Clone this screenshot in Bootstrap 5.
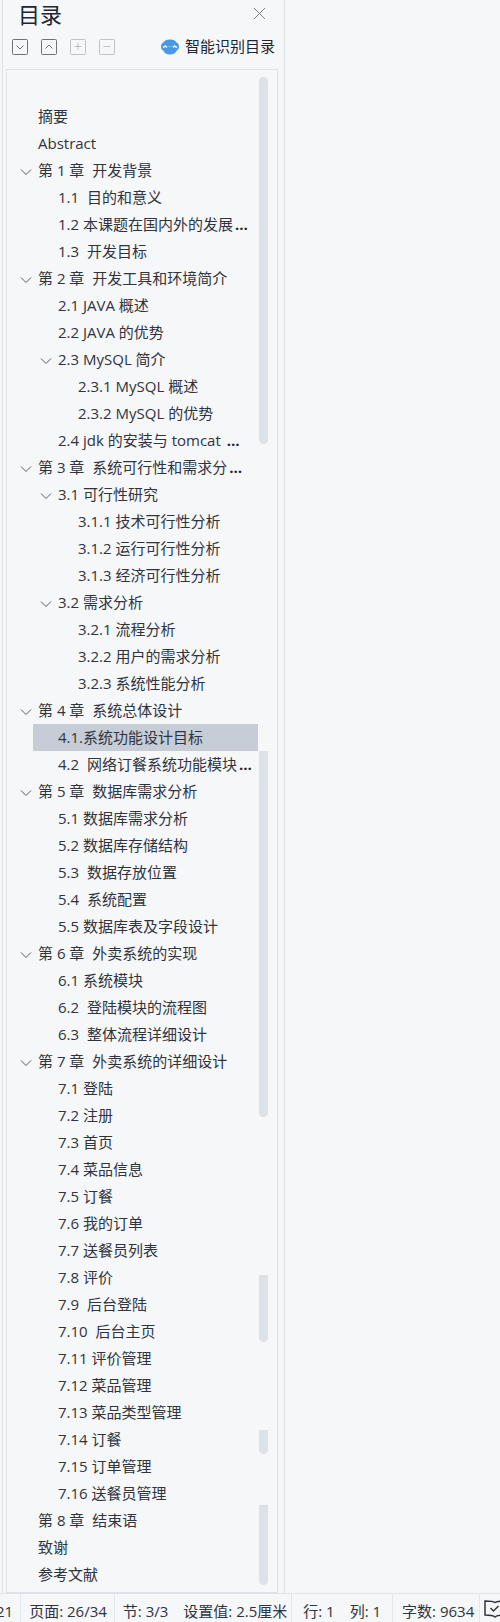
<!DOCTYPE html>
<html lang="zh-CN">
<head>
<meta charset="utf-8">
<meta name="viewport" content="width=device-width, initial-scale=1">
<title>目录</title>
<link rel="stylesheet" href="https://cdn.jsdelivr.net/npm/bootstrap@5.3.0/dist/css/bootstrap.min.css">
<style>
  :root { --ink: #30343e; --line: #dfe3e8; --thumb: #dde2e7; }
  body { background: #f5f7f9; color: var(--ink); font: 15px/27px "Open Sans", "Noto Sans CJK SC", sans-serif; }
  a { color: inherit; text-decoration: none; }
  svg { display: block; fill: none; stroke: currentColor; }
  .plain { border: 0; padding: 0; background: none; color: inherit; }
  .outline-pane { width: 283px; margin-left: 2px; border: solid var(--line); border-width: 0 1px; padding: 0 6px 0 3px; }
  .pane-head { height: 31px; padding: 0 12px; }
  .pane-title { font-size: 22px; line-height: 27px; margin-top: -3px; color: #202632; }
  .pane-close { color: #7b8088; margin-top: -4px; }
  .tools { height: 38px; padding: 0 3px 7px 6px; color: #6e7279; }
  .tools .tool-set { gap: 13px; }
  .tools button:disabled { color: #bfc3c8; }
  .smart { gap: 6px; color: #202632; }
  .tree { border: 1px solid var(--line); padding: 33px 0 4px; }
  .tree li { height: 27px; padding-right: 19px; white-space: nowrap; }
  .tree li > a { flex: 1 1 0; min-width: 0; margin-left: 26px; padding-left: 5px; }
  .tree .lv2 > a { padding-left: 25px; }
  .tree .lv3 > a { padding-left: 45px; }
  .tree .toggle { width: 26px; padding: 3px 0 0 13px; color: #555a63; }
  .tree .lv2 .toggle { width: 46px; padding-left: 33px; }
  .tree .toggle + a { margin-left: 0; padding-left: 5px; }
  .tree .active > a { background: #c6cdd7; }
  .more { font-weight: 700; margin-left: 2px; color: #20242c; }
  .thumbs { top: 7px; right: 9px; width: 9px; }
  .thumbs span { background: var(--thumb); border-radius: 0 0 5px 5px; }
  .thumbs .t1 { height: 367px; border-radius: 5px; }
  .thumbs .t2 { height: 366px; margin-top: 307px; }
  .thumbs .t3 { height: 67px; margin-top: 158px; }
  .thumbs .t4 { height: 24px; margin-top: 88px; }
  .thumbs .t5 { height: 80px; margin-top: 51px; }
  .status { height: 30px; border-top: 1px solid var(--line); line-height: 35px; white-space: nowrap; }
  .status .cell { padding: 0 7px 0 8px; border-right: 1px solid #e4e7eb; gap: 15px; }
  .status .cell:first-child { padding-left: 0; margin-left: -4px; }
  .status .units { padding-right: 4px; }
  .status .wide { padding: 0 11px; }
  .status .count { padding: 0 5px 0 9px; }
</style>
</head>
<body>
<div class="d-flex flex-column min-vh-100 overflow-hidden">
  <main class="d-flex flex-grow-1">
    <aside class="outline-pane flex-shrink-0 d-flex flex-column">
      <header class="pane-head d-flex justify-content-between align-items-center">
        <h1 class="pane-title mb-0 fw-normal">目录</h1>
        <button class="plain pane-close" aria-label="关闭"><svg width="13" height="13" viewBox="0 0 13 13"><path d="M1 1l11 11M12 1L1 12"/></svg></button>
      </header>
      <div class="tools d-flex justify-content-between align-items-center">
        <div class="tool-set d-flex">
          <button class="plain" aria-label="展开"><svg width="16" height="16" viewBox="0 0 16 16"><rect x=".5" y=".5" width="15" height="15" rx="1"/><path d="M4.500 6.500L8 10l3.500-3.500"/></svg></button>
          <button class="plain" aria-label="收起"><svg width="16" height="16" viewBox="0 0 16 16"><rect x=".5" y=".5" width="15" height="15" rx="1"/><path d="M4.500 9.500L8 6l3.500 3.500"/></svg></button>
          <button class="plain" aria-label="增加" disabled><svg width="16" height="16" viewBox="0 0 16 16"><rect x=".5" y=".5" width="15" height="15" rx="1"/><path d="M4.500 7.500h7M8 4v7"/></svg></button>
          <button class="plain" aria-label="减少" disabled><svg width="16" height="16" viewBox="0 0 16 16"><rect x=".5" y=".5" width="15" height="15" rx="1"/><path d="M4.500 7.500h7"/></svg></button>
        </div>
        <button class="plain smart d-flex align-items-center">
          <svg width="18" height="16" viewBox="0 0 18 16"><path fill="#4c97e5" stroke="none" d="M9 .5c3.500 0 5.500 1 6.500 3 1.500.5 2.500 2 2.500 4s-.8 3.500-2.200 4C14.500 14 12.500 15.500 9 15.500S3.500 14 2.200 11.500C.8 11 0 9.500 0 7.500s1-3.500 2.500-4c1-2 3-3 6.500-3z"/><path stroke="#e8f3ff" stroke-width="1.500" d="M2 8.500l2.500-1.500L6 8.500M12 8.500L13.500 7 16 8.500"/><path stroke="#a9cff7" d="M7.500 7.500h1M9.500 7.500h1"/></svg>
          <span>智能识别目录</span>
        </button>
      </div>
      <nav class="tree position-relative flex-grow-1" aria-label="目录">
        <ul class="list-unstyled m-0">
          <li class="d-flex"><a href="#">摘要</a></li>
          <li class="d-flex"><a href="#">Abstract</a></li>
          <li class="d-flex"><button class="plain toggle" aria-label="折叠"><svg width="12" height="8" viewBox="0 0 12 8"><path d="M1 1.500l5 5 5-5"/></svg></button><a href="#">第 1 章&nbsp; 开发背景</a></li>
          <li class="d-flex lv2"><a href="#">1.1&nbsp; 目的和意义</a></li>
          <li class="d-flex lv2"><a href="#">1.2 本课题在国内外的发展<span class="more">…</span></a></li>
          <li class="d-flex lv2"><a href="#">1.3&nbsp; 开发目标</a></li>
          <li class="d-flex"><button class="plain toggle" aria-label="折叠"><svg width="12" height="8" viewBox="0 0 12 8"><path d="M1 1.500l5 5 5-5"/></svg></button><a href="#">第 2 章&nbsp; 开发工具和环境简介</a></li>
          <li class="d-flex lv2"><a href="#">2.1 JAVA 概述</a></li>
          <li class="d-flex lv2"><a href="#">2.2 JAVA 的优势</a></li>
          <li class="d-flex lv2"><button class="plain toggle" aria-label="折叠"><svg width="12" height="8" viewBox="0 0 12 8"><path d="M1 1.500l5 5 5-5"/></svg></button><a href="#">2.3 MySQL 简介</a></li>
          <li class="d-flex lv3"><a href="#">2.3.1 MySQL 概述</a></li>
          <li class="d-flex lv3"><a href="#">2.3.2 MySQL 的优势</a></li>
          <li class="d-flex lv2"><a href="#">2.4 jdk 的安装与 tomcat <span class="more">…</span></a></li>
          <li class="d-flex"><button class="plain toggle" aria-label="折叠"><svg width="12" height="8" viewBox="0 0 12 8"><path d="M1 1.500l5 5 5-5"/></svg></button><a href="#">第 3 章&nbsp; 系统可行性和需求分<span class="more">…</span></a></li>
          <li class="d-flex lv2"><button class="plain toggle" aria-label="折叠"><svg width="12" height="8" viewBox="0 0 12 8"><path d="M1 1.500l5 5 5-5"/></svg></button><a href="#">3.1 可行性研究</a></li>
          <li class="d-flex lv3"><a href="#">3.1.1 技术可行性分析</a></li>
          <li class="d-flex lv3"><a href="#">3.1.2 运行可行性分析</a></li>
          <li class="d-flex lv3"><a href="#">3.1.3 经济可行性分析</a></li>
          <li class="d-flex lv2"><button class="plain toggle" aria-label="折叠"><svg width="12" height="8" viewBox="0 0 12 8"><path d="M1 1.500l5 5 5-5"/></svg></button><a href="#">3.2 需求分析</a></li>
          <li class="d-flex lv3"><a href="#">3.2.1 流程分析</a></li>
          <li class="d-flex lv3"><a href="#">3.2.2 用户的需求分析</a></li>
          <li class="d-flex lv3"><a href="#">3.2.3 系统性能分析</a></li>
          <li class="d-flex"><button class="plain toggle" aria-label="折叠"><svg width="12" height="8" viewBox="0 0 12 8"><path d="M1 1.500l5 5 5-5"/></svg></button><a href="#">第 4 章&nbsp; 系统总体设计</a></li>
          <li class="d-flex lv2 active"><a href="#" aria-current="true">4.1.系统功能设计目标</a></li>
          <li class="d-flex lv2"><a href="#">4.2&nbsp; 网络订餐系统功能模块<span class="more">…</span></a></li>
          <li class="d-flex"><button class="plain toggle" aria-label="折叠"><svg width="12" height="8" viewBox="0 0 12 8"><path d="M1 1.500l5 5 5-5"/></svg></button><a href="#">第 5 章&nbsp; 数据库需求分析</a></li>
          <li class="d-flex lv2"><a href="#">5.1 数据库需求分析</a></li>
          <li class="d-flex lv2"><a href="#">5.2 数据库存储结构</a></li>
          <li class="d-flex lv2"><a href="#">5.3&nbsp; 数据存放位置</a></li>
          <li class="d-flex lv2"><a href="#">5.4&nbsp; 系统配置</a></li>
          <li class="d-flex lv2"><a href="#">5.5 数据库表及字段设计</a></li>
          <li class="d-flex"><button class="plain toggle" aria-label="折叠"><svg width="12" height="8" viewBox="0 0 12 8"><path d="M1 1.500l5 5 5-5"/></svg></button><a href="#">第 6 章&nbsp; 外卖系统的实现</a></li>
          <li class="d-flex lv2"><a href="#">6.1 系统模块</a></li>
          <li class="d-flex lv2"><a href="#">6.2&nbsp; 登陆模块的流程图</a></li>
          <li class="d-flex lv2"><a href="#">6.3&nbsp; 整体流程详细设计</a></li>
          <li class="d-flex"><button class="plain toggle" aria-label="折叠"><svg width="12" height="8" viewBox="0 0 12 8"><path d="M1 1.500l5 5 5-5"/></svg></button><a href="#">第 7 章&nbsp; 外卖系统的详细设计</a></li>
          <li class="d-flex lv2"><a href="#">7.1 登陆</a></li>
          <li class="d-flex lv2"><a href="#">7.2 注册</a></li>
          <li class="d-flex lv2"><a href="#">7.3 首页</a></li>
          <li class="d-flex lv2"><a href="#">7.4 菜品信息</a></li>
          <li class="d-flex lv2"><a href="#">7.5 订餐</a></li>
          <li class="d-flex lv2"><a href="#">7.6 我的订单</a></li>
          <li class="d-flex lv2"><a href="#">7.7 送餐员列表</a></li>
          <li class="d-flex lv2"><a href="#">7.8 评价</a></li>
          <li class="d-flex lv2"><a href="#">7.9&nbsp; 后台登陆</a></li>
          <li class="d-flex lv2"><a href="#">7.10&nbsp; 后台主页</a></li>
          <li class="d-flex lv2"><a href="#">7.11 评价管理</a></li>
          <li class="d-flex lv2"><a href="#">7.12 菜品管理</a></li>
          <li class="d-flex lv2"><a href="#">7.13 菜品类型管理</a></li>
          <li class="d-flex lv2"><a href="#">7.14 订餐</a></li>
          <li class="d-flex lv2"><a href="#">7.15 订单管理</a></li>
          <li class="d-flex lv2"><a href="#">7.16 送餐员管理</a></li>
          <li class="d-flex"><a href="#">第 8 章&nbsp; 结束语</a></li>
          <li class="d-flex"><a href="#">致谢</a></li>
          <li class="d-flex"><a href="#">参考文献</a></li>
        </ul>
        <div class="thumbs position-absolute d-flex flex-column" aria-hidden="true">
          <span class="t1"></span><span class="t2"></span><span class="t3"></span><span class="t4"></span><span class="t5"></span>
        </div>
      </nav>
    </aside>
  </main>
  <footer class="status d-flex overflow-hidden">
    <div class="cell">21</div>
    <div class="cell">页面: 26/34</div>
    <div class="cell units d-flex"><span>节: 3/3</span><span>设置值: 2.5厘米</span></div>
    <div class="cell wide d-flex"><span>行: 1</span><span>列: 1</span></div>
    <div class="cell count">字数: 9634</div>
    <button class="plain flex-shrink-0 ps-1" aria-label="拼写检查"><svg width="22" height="18" viewBox="0 0 22 18"><path stroke-width="1.500" d="M11 2.500C9 1 7 1 1 1v14c5 0 8 0 10 2 2-2 5-2 10-2V1c-6 0-8 0-10 1.500zM6.500 8l3 3 5-5"/></svg></button>
  </footer>
</div>
<script src="https://cdn.jsdelivr.net/npm/bootstrap@5.3.0/dist/js/bootstrap.bundle.min.js"></script>
</body>
</html>
